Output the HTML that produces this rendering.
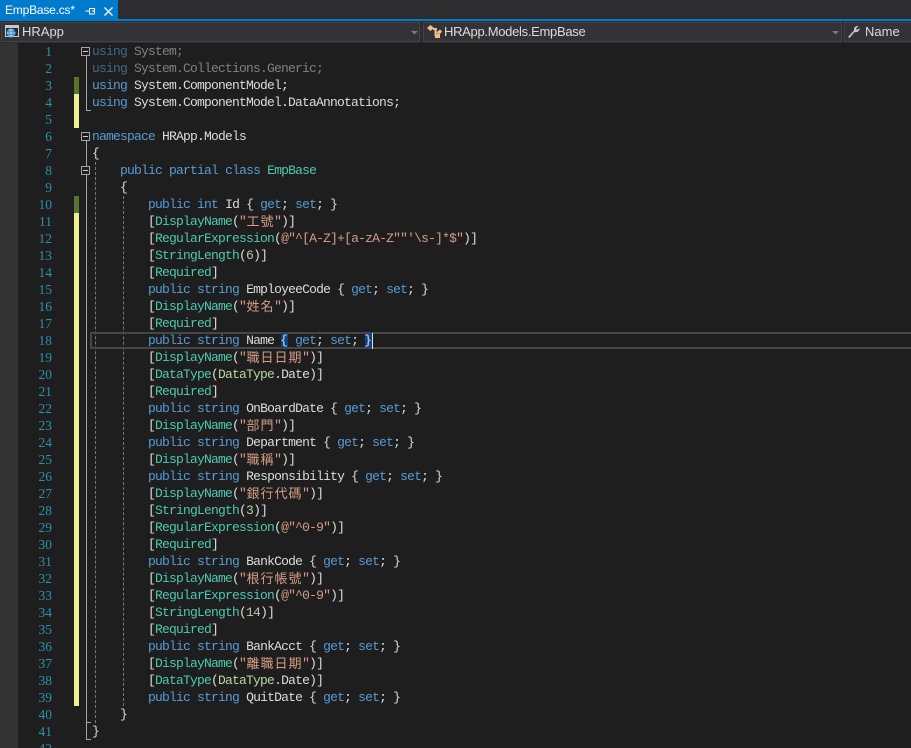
<!DOCTYPE html>
<html><head><meta charset="utf-8">
<style>
html,body{margin:0;padding:0;width:911px;height:748px;overflow:hidden;background:#1e1e1e}
#p{position:relative;width:911px;height:748px;overflow:hidden;font-family:"Liberation Sans","Noto Sans CJK TC",sans-serif}
.a{position:absolute}
.l{position:absolute;left:92px;height:17px;font:13px/17px "Liberation Mono","Noto Sans CJK TC",monospace;letter-spacing:-.8px;color:#dcdcdc;white-space:pre}
.n{position:absolute;left:19px;width:33px;text-align:right;height:17px;font:13.5px/17px "Liberation Serif",serif;color:#2b91af}
.k{color:#569cd6}.t{color:#4ec9b0}.s{color:#d69d85}.d{color:#b5cea8}.e{color:#b8d7a3}
.f{color:#808080}.g{color:#3f6a8c}
.c{display:inline-block;width:14px;font-size:13px;line-height:16px;letter-spacing:0;text-align:center;vertical-align:top;color:#d69d85;font-family:"Noto Sans CJK TC",sans-serif}
.b{background:#0e4583;display:inline-block;width:7px;height:15px;line-height:15px;vertical-align:top;letter-spacing:0;text-indent:-1px;margin-top:1px}
.y{position:absolute;left:74px;width:5px;background:#efef91}
.gr{position:absolute;left:74px;width:5px;background:#577430}
.u{position:absolute;color:#dcdcdc;font-size:13px;line-height:20px;top:22px}
</style></head><body><div id="p">
<div class="a" style="left:0;top:0;width:911px;height:19px;background:#2d2d30"></div>
<div class="a" style="left:0;top:0;width:118px;height:19px;background:#007acc"></div>
<div class="a" style="left:0;top:19px;width:911px;height:2px;background:#007acc"></div>
<div class="a" style="left:5px;top:0;color:#fff;font-size:12px;letter-spacing:-.2px;line-height:21px;white-space:pre">EmpBase.cs*</div>
<svg class="a" style="left:84px;top:5px" width="30" height="12" fill="none" stroke="#fff" stroke-width="1"><path d="M1.500 6H5M5.500 3V9H10.500M5.500 3.500H10.500V8.500M10.500 6H8"/><path d="M20.500 2.500L28.500 10.500M28.500 2.500L20.500 10.500" stroke-width="1.300"/></svg>

<div class="a" style="left:0;top:21px;width:911px;height:22px;background:#2d2d30"></div>
<div class="a" style="left:1px;top:22px;width:417px;height:18px;background:#333337;border:1px solid #434346"></div>
<div class="a" style="left:423px;top:22px;width:417px;height:18px;background:#333337;border:1px solid #434346"></div>
<div class="a" style="left:844px;top:22px;width:70px;height:18px;background:#333337;border:1px solid #434346"></div>
<svg class="a" style="left:5px;top:24px" width="15" height="15"><rect x=".5" y="1.500" width="13" height="11" fill="#2d2d30" stroke="#c8c8c8"/><rect x="1" y="2" width="12" height="2" fill="#c8c8c8"/><circle cx="6" cy="9" r="4.500" fill="#2a8fd0"/><path d="M1.500 9H10.500M6 4.500V13.500M3 6H9M3 12H9" stroke="#cfe8f7" stroke-width=".7" fill="none"/></svg>
<div class="u" style="left:22px">HRApp</div>
<svg class="a" style="left:411px;top:31px" width="7" height="4"><path d="M0 0H7L3.500 3.500Z" fill="#7a7a7a"/></svg>
<svg class="a" style="left:427px;top:24px" width="15" height="15" fill="#e8c28a"><path d="M0 4L3.500 1L7 4L3.500 7Z"/><rect x="6" y="4" width="4" height="2"/><rect x="7.500" y="6" width="2" height="6"/><path d="M8 7.500H10.500L13 5.500L15 7.500L13 10L10 9.500Z"/><rect x="8" y="10" width="5" height="4"/></svg>
<div class="u" style="left:444px;letter-spacing:-.3px">HRApp.Models.EmpBase</div>
<svg class="a" style="left:832px;top:31px" width="7" height="4"><path d="M0 0H7L3.500 3.500Z" fill="#7a7a7a"/></svg>
<svg class="a" style="left:847px;top:25px" width="13" height="13"><path d="M1 12L7 5.500C6.500 3 8.500 .5 11.500 1L9 3.500L10 5L12.500 3C12.800 6 10 8 7.500 7L2.500 13Z" fill="#c8c8c8"/></svg>
<div class="u" style="left:865px">Name</div>

<div class="a" style="left:0;top:43px;width:18px;height:705px;background:#333333"></div>

<!-- change bars -->
<div class="gr" style="top:77px;height:17px"></div>
<div class="y" style="top:94px;height:34px"></div>
<div class="gr" style="top:196px;height:17px"></div>
<div class="y" style="top:213px;height:493px"></div>

<!-- fold lines -->
<div class="a" style="left:86px;top:56px;width:1px;height:54px;background:#a5a5a5"></div>
<div class="a" style="left:86px;top:110px;width:5px;height:1px;background:#a5a5a5"></div>
<div class="a" style="left:86px;top:141px;width:1px;height:598px;background:#a5a5a5"></div>
<div class="a" style="left:86px;top:739px;width:5px;height:1px;background:#a5a5a5"></div>
<div class="a" style="left:87px;top:722px;width:4px;height:1px;background:#a5a5a5"></div>
<div class="a" style="left:81px;top:47px;width:9px;height:9px;border:1px solid #a5a5a5;box-sizing:border-box;background:#1e1e1e"></div>
<div class="a" style="left:83px;top:51px;width:5px;height:1px;background:#c8c8c8"></div>
<div class="a" style="left:81px;top:132px;width:9px;height:9px;border:1px solid #a5a5a5;box-sizing:border-box;background:#1e1e1e"></div>
<div class="a" style="left:83px;top:136px;width:5px;height:1px;background:#c8c8c8"></div>
<div class="a" style="left:81px;top:166px;width:9px;height:9px;border:1px solid #a5a5a5;box-sizing:border-box;background:#1e1e1e"></div>
<div class="a" style="left:83px;top:170px;width:5px;height:1px;background:#c8c8c8"></div>
<!-- guides -->
<div class="a" style="left:95px;top:162px;width:0;height:561px;border-left:1px dashed #777"></div>
<div class="a" style="left:123px;top:196px;width:0;height:510px;border-left:1px dashed #777"></div>
<!-- current line -->
<div class="a" style="left:90px;top:332px;width:830px;height:17px;border:2px solid #464646;box-sizing:border-box"></div>
<!-- caret -->
<div class="a" style="left:372px;top:333px;width:1px;height:16px;background:#dcdcdc;z-index:3"></div>

<div class="n" style="top:43px">1</div><div class="l" style="top:43px"><span class="g">using</span><span class="f"> System;</span></div>
<div class="n" style="top:60px">2</div><div class="l" style="top:60px"><span class="g">using</span><span class="f"> System.Collections.Generic;</span></div>
<div class="n" style="top:77px">3</div><div class="l" style="top:77px"><span class="k">using</span> System.ComponentModel;</div>
<div class="n" style="top:94px">4</div><div class="l" style="top:94px"><span class="k">using</span> System.ComponentModel.DataAnnotations;</div>
<div class="n" style="top:111px">5</div>
<div class="n" style="top:128px">6</div><div class="l" style="top:128px"><span class="k">namespace</span> HRApp.Models</div>
<div class="n" style="top:145px">7</div><div class="l" style="top:145px">{</div>
<div class="n" style="top:162px">8</div><div class="l" style="top:162px">    <span class="k">public</span> <span class="k">partial</span> <span class="k">class</span> <span class="t">EmpBase</span></div>
<div class="n" style="top:179px">9</div><div class="l" style="top:179px">    {</div>
<div class="n" style="top:196px">10</div><div class="l" style="top:196px">        <span class="k">public</span> <span class="k">int</span> Id { <span class="k">get</span>; <span class="k">set</span>; }</div>
<div class="n" style="top:213px">11</div><div class="l" style="top:213px">        [<span class="t">DisplayName</span>(<span class="s">"<span class="c">工</span><span class="c">號</span>"</span>)]</div>
<div class="n" style="top:230px">12</div><div class="l" style="top:230px">        [<span class="t">RegularExpression</span>(<span class="s">@"^[A-Z]+[a-zA-Z""'\s-]*$"</span>)]</div>
<div class="n" style="top:247px">13</div><div class="l" style="top:247px">        [<span class="t">StringLength</span>(<span class="d">6</span>)]</div>
<div class="n" style="top:264px">14</div><div class="l" style="top:264px">        [<span class="t">Required</span>]</div>
<div class="n" style="top:281px">15</div><div class="l" style="top:281px">        <span class="k">public</span> <span class="k">string</span> EmployeeCode { <span class="k">get</span>; <span class="k">set</span>; }</div>
<div class="n" style="top:298px">16</div><div class="l" style="top:298px">        [<span class="t">DisplayName</span>(<span class="s">"<span class="c">姓</span><span class="c">名</span>"</span>)]</div>
<div class="n" style="top:315px">17</div><div class="l" style="top:315px">        [<span class="t">Required</span>]</div>
<div class="n" style="top:332px">18</div><div class="l" style="top:332px;z-index:2">        <span class="k">public</span> <span class="k">string</span> Name <span class="b">{</span> <span class="k">get</span>; <span class="k">set</span>; <span class="b">}</span></div>
<div class="n" style="top:349px">19</div><div class="l" style="top:349px">        [<span class="t">DisplayName</span>(<span class="s">"<span class="c">職</span><span class="c">日</span><span class="c">日</span><span class="c">期</span>"</span>)]</div>
<div class="n" style="top:366px">20</div><div class="l" style="top:366px">        [<span class="t">DataType</span>(<span class="e">DataType</span>.Date)]</div>
<div class="n" style="top:383px">21</div><div class="l" style="top:383px">        [<span class="t">Required</span>]</div>
<div class="n" style="top:400px">22</div><div class="l" style="top:400px">        <span class="k">public</span> <span class="k">string</span> OnBoardDate { <span class="k">get</span>; <span class="k">set</span>; }</div>
<div class="n" style="top:417px">23</div><div class="l" style="top:417px">        [<span class="t">DisplayName</span>(<span class="s">"<span class="c">部</span><span class="c">門</span>"</span>)]</div>
<div class="n" style="top:434px">24</div><div class="l" style="top:434px">        <span class="k">public</span> <span class="k">string</span> Department { <span class="k">get</span>; <span class="k">set</span>; }</div>
<div class="n" style="top:451px">25</div><div class="l" style="top:451px">        [<span class="t">DisplayName</span>(<span class="s">"<span class="c">職</span><span class="c">稱</span>"</span>)]</div>
<div class="n" style="top:468px">26</div><div class="l" style="top:468px">        <span class="k">public</span> <span class="k">string</span> Responsibility { <span class="k">get</span>; <span class="k">set</span>; }</div>
<div class="n" style="top:485px">27</div><div class="l" style="top:485px">        [<span class="t">DisplayName</span>(<span class="s">"<span class="c">銀</span><span class="c">行</span><span class="c">代</span><span class="c">碼</span>"</span>)]</div>
<div class="n" style="top:502px">28</div><div class="l" style="top:502px">        [<span class="t">StringLength</span>(<span class="d">3</span>)]</div>
<div class="n" style="top:519px">29</div><div class="l" style="top:519px">        [<span class="t">RegularExpression</span>(<span class="s">@"^0-9"</span>)]</div>
<div class="n" style="top:536px">30</div><div class="l" style="top:536px">        [<span class="t">Required</span>]</div>
<div class="n" style="top:553px">31</div><div class="l" style="top:553px">        <span class="k">public</span> <span class="k">string</span> BankCode { <span class="k">get</span>; <span class="k">set</span>; }</div>
<div class="n" style="top:570px">32</div><div class="l" style="top:570px">        [<span class="t">DisplayName</span>(<span class="s">"<span class="c">根</span><span class="c">行</span><span class="c">帳</span><span class="c">號</span>"</span>)]</div>
<div class="n" style="top:587px">33</div><div class="l" style="top:587px">        [<span class="t">RegularExpression</span>(<span class="s">@"^0-9"</span>)]</div>
<div class="n" style="top:604px">34</div><div class="l" style="top:604px">        [<span class="t">StringLength</span>(<span class="d">14</span>)]</div>
<div class="n" style="top:621px">35</div><div class="l" style="top:621px">        [<span class="t">Required</span>]</div>
<div class="n" style="top:638px">36</div><div class="l" style="top:638px">        <span class="k">public</span> <span class="k">string</span> BankAcct { <span class="k">get</span>; <span class="k">set</span>; }</div>
<div class="n" style="top:655px">37</div><div class="l" style="top:655px">        [<span class="t">DisplayName</span>(<span class="s">"<span class="c">離</span><span class="c">職</span><span class="c">日</span><span class="c">期</span>"</span>)]</div>
<div class="n" style="top:672px">38</div><div class="l" style="top:672px">        [<span class="t">DataType</span>(<span class="e">DataType</span>.Date)]</div>
<div class="n" style="top:689px">39</div><div class="l" style="top:689px">        <span class="k">public</span> <span class="k">string</span> QuitDate { <span class="k">get</span>; <span class="k">set</span>; }</div>
<div class="n" style="top:706px">40</div><div class="l" style="top:706px">    }</div>
<div class="n" style="top:723px">41</div><div class="l" style="top:723px">}</div>
<div class="n" style="top:740px">42</div>
</div></body></html>
